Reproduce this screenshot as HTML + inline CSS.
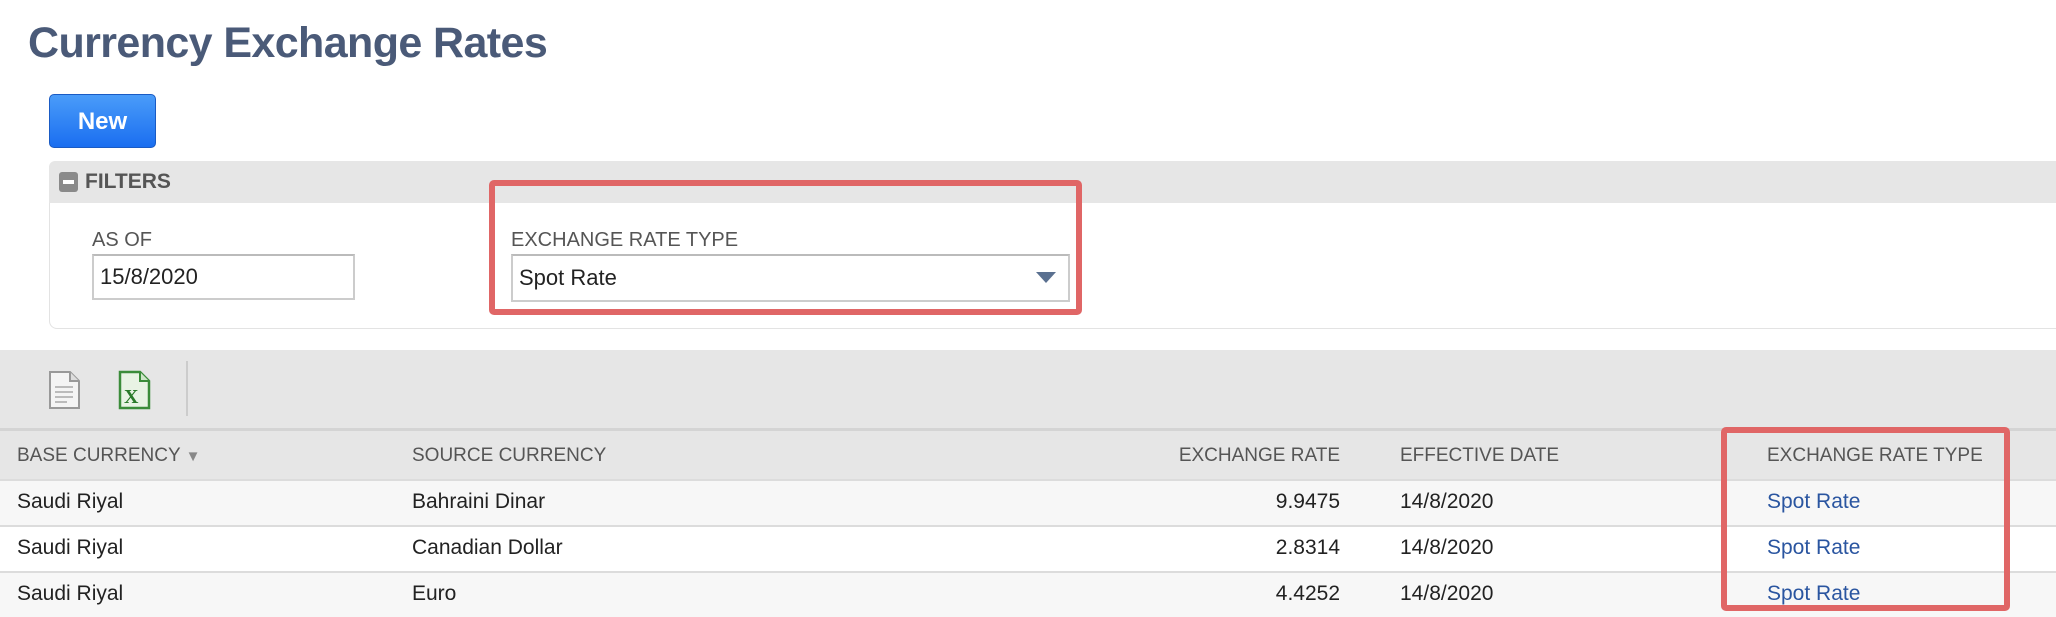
<!DOCTYPE html>
<html><head><meta charset="utf-8"><style>
*{margin:0;padding:0;box-sizing:border-box}
body{width:2056px;height:616px;overflow:hidden;background:#fff;font-family:"Liberation Sans",sans-serif;position:relative;color:#222}
.a{position:absolute;white-space:nowrap}
.title{left:28px;top:19px;font-size:43px;font-weight:bold;color:#4a5a78;letter-spacing:-0.6px}
.btn{left:49px;top:94px;width:107px;height:54px;border-radius:5px;background:linear-gradient(#4a9cf9,#1a6ef0);border:1px solid #1a5bc4;color:#fff;font-weight:bold;font-size:24px;text-align:center;line-height:54px}
.fbar{left:49px;top:161px;width:2020px;height:42px;background:#e6e6e6;border-radius:6px 0 0 0}
.fpanel{left:49px;top:161px;width:2020px;height:168px;border:1px solid #e3e3e3;border-radius:8px 0 0 8px}
.lbl{font-size:20px;color:#555}
.inp{border:2px solid #ccc;border-top-color:#bbb;background:#fff;font-size:22px;color:#222;padding-left:6px}
.red{border:6px solid #e06666;border-radius:5px}
.tb{left:0;top:350px;width:2056px;height:79px;background:#e6e6e6}
.hdr{left:0;top:428px;width:2056px;height:52px;background:#e6e6e6;border-top:3px solid #d4d4d4}
.h{font-size:19px;color:#555;top:445px}
.row{left:0;width:2056px;height:46px;border-top:2px solid #dcdcdc}
.c{font-size:21px;color:#222}
.lnk{color:#2a55a0}
</style></head><body>
<div class="a title">Currency Exchange Rates</div>
<div class="a btn">New</div>
<div class="a fpanel"></div>
<div class="a fbar"></div>
<div class="a" style="left:59px;top:172px;width:19px;height:20px;background:#8a8a8a;border-radius:3px"><div style="position:absolute;left:4px;top:8px;width:11px;height:4px;background:#fff"></div></div>
<div class="a" style="left:85px;top:170px;font-size:21px;font-weight:bold;color:#555">FILTERS</div>
<div class="a lbl" style="left:92px;top:229px">AS OF</div>
<div class="a inp" style="left:92px;top:254px;width:263px;height:46px;line-height:42px">15/8/2020</div>
<div class="a lbl" style="left:511px;top:229px">EXCHANGE RATE TYPE</div>
<div class="a inp" style="left:511px;top:254px;width:559px;height:48px;line-height:44px">Spot Rate</div>
<div class="a" style="left:1036px;top:272px;width:0;height:0;border-left:10px solid transparent;border-right:10px solid transparent;border-top:11px solid #5a7090"></div>
<div class="a red" style="left:489px;top:180px;width:593px;height:135px"></div>
<div class="a tb"></div>
<svg class="a" style="left:46px;top:370px" width="40" height="40" viewBox="0 0 40 40"><path d="M4 2h20l9 9v27H4z" fill="#f4f4f4" stroke="#999" stroke-width="2"/><path d="M24 2v9h9" fill="#ddd" stroke="#999" stroke-width="2"/><path d="M9 17h18M9 22h18M9 27h18M9 32h12" stroke="#bbb" stroke-width="2"/></svg>
<svg class="a" style="left:116px;top:370px" width="40" height="40" viewBox="0 0 40 40"><path d="M4 2h20l9 9v27H4z" fill="#e8f3e4" stroke="#3b8c3a" stroke-width="2.5"/><path d="M24 2v9h9" fill="#cde6c8" stroke="#3b8c3a" stroke-width="2"/><text x="8" y="33" font-family="Liberation Serif" font-weight="bold" font-size="20" fill="#2a7a2a">X</text></svg>
<div class="a" style="left:186px;top:361px;width:2px;height:55px;background:#ccc"></div>
<div class="a hdr"></div>
<div class="a h" style="left:17px">BASE CURRENCY <span style="color:#888;font-size:15px">▼</span></div>
<div class="a h" style="left:412px">SOURCE CURRENCY</div>
<div class="a h" style="right:716px">EXCHANGE RATE</div>
<div class="a h" style="left:1400px">EFFECTIVE DATE</div>
<div class="a h" style="left:1767px">EXCHANGE RATE TYPE</div>
<div class="a row" style="top:479px;background:#f7f7f7"></div>
<div class="a row" style="top:525px;background:#fff"></div>
<div class="a row" style="top:571px;background:#f7f7f7;height:46px"></div>
<div class="a c" style="left:17px;top:490px">Saudi Riyal</div>
<div class="a c" style="left:412px;top:490px">Bahraini Dinar</div>
<div class="a c" style="right:716px;top:490px">9.9475</div>
<div class="a c" style="left:1400px;top:490px">14/8/2020</div>
<div class="a c lnk" style="left:1767px;top:490px">Spot Rate</div>
<div class="a c" style="left:17px;top:536px">Saudi Riyal</div>
<div class="a c" style="left:412px;top:536px">Canadian Dollar</div>
<div class="a c" style="right:716px;top:536px">2.8314</div>
<div class="a c" style="left:1400px;top:536px">14/8/2020</div>
<div class="a c lnk" style="left:1767px;top:536px">Spot Rate</div>
<div class="a c" style="left:17px;top:582px">Saudi Riyal</div>
<div class="a c" style="left:412px;top:582px">Euro</div>
<div class="a c" style="right:716px;top:582px">4.4252</div>
<div class="a c" style="left:1400px;top:582px">14/8/2020</div>
<div class="a c lnk" style="left:1767px;top:582px">Spot Rate</div>
<div class="a red" style="left:1721px;top:427px;width:289px;height:184px"></div>
</body></html>
